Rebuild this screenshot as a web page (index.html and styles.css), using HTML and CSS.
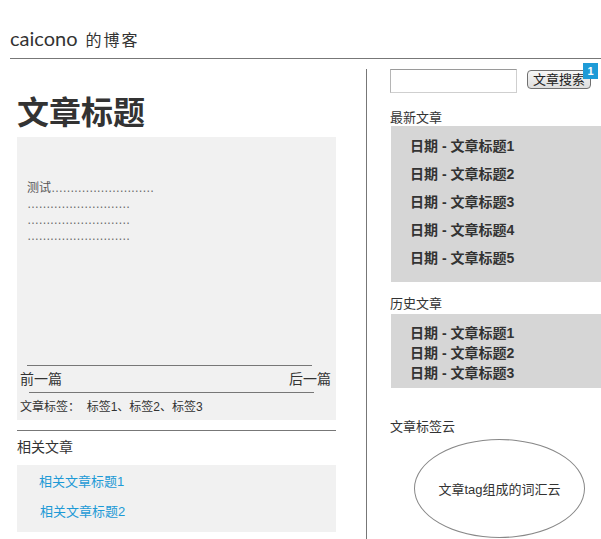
FILE: index.html
```html
<!DOCTYPE html>
<html lang="zh-CN">
<head>
<meta charset="utf-8">
<title>caicono 的博客</title>
<link rel="stylesheet" href="styles.css">
</head>
<body>
<header class="site-header">
  <span class="brand">caicono</span><span class="brand-cn">的博客</span>
</header>
<div class="layout">
  <main class="main">
    <h1 class="post-title">文章标题</h1>
    <article class="post">
      <div class="post-body">
        <p>测试<span class="dots">………………………</span></p>
        <p><span class="dots">………………………</span></p>
        <p><span class="dots">………………………</span></p>
        <p><span class="dots">………………………</span></p>
      </div>
      <hr class="rule rule-top">
      <div class="post-nav"><a href="#">前一篇</a><a href="#">后一篇</a></div>
      <hr class="rule rule-bottom">
      <div class="post-tags">文章标签：&nbsp; 标签1、标签2、标签3</div>
    </article>
    <section class="related">
      <h2 class="related-title">相关文章</h2>
      <ul class="related-list">
        <li><a href="#">相关文章标题1</a></li>
        <li class="shift"><a href="#">相关文章标题2</a></li>
      </ul>
    </section>
  </main>
  <aside class="sidebar">
    <form class="search">
      <input class="search-input" type="text">
      <button class="search-btn" type="button">文章搜索<span class="badge">1</span></button>
    </form>
    <h3 class="widget-title first">最新文章</h3>
    <ul class="latest-list">
      <li>日期 - 文章标题1</li>
      <li>日期 - 文章标题2</li>
      <li>日期 - 文章标题3</li>
      <li>日期 - 文章标题4</li>
      <li>日期 - 文章标题5</li>
    </ul>
    <h3 class="widget-title history">历史文章</h3>
    <ul class="history-list">
      <li>日期 - 文章标题1</li>
      <li>日期 - 文章标题2</li>
      <li>日期 - 文章标题3</li>
    </ul>
    <h3 class="widget-title cloud">文章标签云</h3>
    <div class="tag-cloud">文章tag组成的词汇云</div>
  </aside>
</div>
</body>
</html>
```

FILE: styles.css
```css
* { box-sizing: border-box; }

html, body {
  margin: 0;
  padding: 0;
  overflow: hidden;
}

body {
  width: 601px;
  font-family: "Liberation Sans", "Noto Sans CJK SC", sans-serif;
  color: #333;
  background: #fff;
}

a { text-decoration: none; color: inherit; }
ul { list-style: none; margin: 0; padding: 0; }
h1, h2, h3, p { margin: 0; font-weight: normal; }

.site-header {
  margin-left: 10px;
  height: 59px;
  padding-top: 25px;
  line-height: 26px;
  border-bottom: 1px solid #777;
  white-space: nowrap;
}

.brand {
  font-family: Lato, "Open Sans", sans-serif;
  font-size: 20px;
  color: #333;
}

.brand-cn {
  font-family: "Noto Sans CJK SC", sans-serif;
  font-size: 16px;
  letter-spacing: 2px;
  margin-left: 8px;
  color: #333;
}

.layout {
  display: flex;
  align-items: stretch;
  min-height: 480px;
}

.main {
  margin-left: 17px;
  width: 319px;
  flex: none;
}

.post-title {
  margin-top: 31px;
  margin-bottom: 7px;
  font-family: "Noto Sans CJK SC", sans-serif;
  font-size: 32px;
  line-height: 40px;
  font-weight: 700;
  color: #333;
}

.post {
  background: #f1f1f1;
}

.post-body {
  height: 228px;
  padding: 43px 10px 0;
  font-size: 12px;
  line-height: 16px;
  color: #555;
}

.dots {
  font-family: "Liberation Sans", sans-serif;
  letter-spacing: -0.6px;
  color: #666;
}

.rule {
  border: 0;
  border-top: 1px solid #777;
  height: 0;
}

.rule-top { margin: 0 24px 0 10px; }
.rule-bottom { margin: 0 22px 0 12px; }

.post-nav {
  display: flex;
  justify-content: space-between;
  height: 26px;
  line-height: 26px;
  padding: 0 5px 0 3px;
  font-size: 14px;
  color: #333;
}

.post-tags {
  padding: 4px 3px 3px;
  font-size: 12px;
  line-height: 20px;
  color: #333;
}

.related {
  margin-top: 10px;
  border-top: 1px solid #777;
}

.related-title {
  margin: 6px 0 8px;
  font-size: 14px;
  line-height: 20px;
  color: #333;
}

.related-list {
  background: #f1f1f1;
  padding: 2px 0 5px 22px;
}

.related-list li {
  font-size: 13px;
  line-height: 30px;
}

.related-list li.shift { padding-left: 1px; }

.related-list a { color: #1d9ad6; }

.sidebar {
  flex: 1;
  margin-left: 30px;
  margin-top: 10px;
  border-left: 1px solid #777;
  padding-left: 23px;
}

.search {
  display: flex;
  align-items: flex-start;
  margin: 0;
}

.search-input {
  width: 127px;
  height: 24px;
  margin: 0;
  border: 1px solid #cfcfcf;
  border-top-color: #9a9a9a;
  border-left-color: #b5b5b5;
  background: #fff;
}

.search-btn {
  position: relative;
  margin: 1px 0 0 10px;
  width: 64px;
  height: 19px;
  padding: 0 5px;
  font-family: "Liberation Sans", "Noto Sans CJK SC", sans-serif;
  font-size: 13px;
  line-height: 17px;
  color: #222;
  border: 1px solid #707070;
  border-radius: 4px;
  background: linear-gradient(#f7f7f7, #dedede);
}

.badge {
  position: absolute;
  top: -8px;
  right: -8px;
  width: 15px;
  height: 16px;
  background: #1e9bd7;
  color: #fff;
  font-size: 11px;
  font-weight: 700;
  line-height: 16px;
  text-align: center;
}

.widget-title {
  font-size: 13px;
  line-height: 16px;
  color: #333;
}

.widget-title.first { margin: 17px 0 0; }
.widget-title.history { margin: 14px 0 2px; }
.widget-title.cloud { margin: 31px 0 4px; }

.latest-list {
  display: flex;
  flex-direction: column;
  gap: 12px;
  margin-left: 1px;
  padding: 12px 0 16px 19px;
  background: #d6d6d6;
}

.latest-list li,
.history-list li {
  font-size: 14px;
  font-weight: 700;
  line-height: 16px;
  color: #333;
}

.history-list {
  margin-left: 1px;
  padding: 9px 0 5px 19px;
  background: #d6d6d6;
}

.history-list li { line-height: 20px; }

.tag-cloud {
  display: flex;
  align-items: center;
  justify-content: center;
  width: 171px;
  height: 99px;
  margin-left: 24px;
  border: 1px solid #888;
  border-radius: 50%;
  font-size: 13px;
  color: #333;
}
```
